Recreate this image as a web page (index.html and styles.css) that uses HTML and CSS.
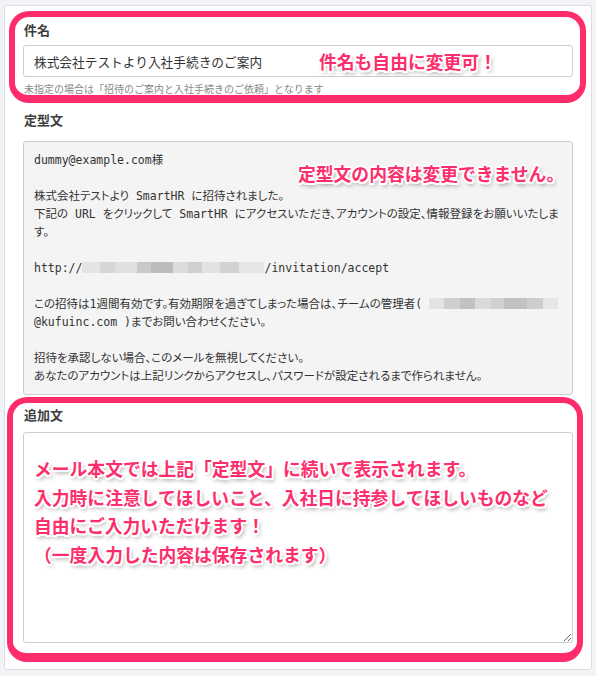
FILE: index.html
```html
<!DOCTYPE html>
<html lang="ja">
<head>
<meta charset="utf-8">
<title>招待メール</title>
<link rel="stylesheet" href="styles.css">
</head>
<body>
<div class="card">
  <div class="mark mark-subject">
    <div class="field-label">件名</div>
    <div class="input-wrap">
      <input class="text-input" type="text" value="株式会社テストより入社手続きのご案内">
      <span class="note note-subject">件名も自由に変更可！</span>
    </div>
    <p class="help">未指定の場合は「招待のご案内と入社手続きのご依頼」となります</p>
  </div>

  <div class="field-label template-label">定型文</div>
  <div class="template">
<pre class="template-text">dummy@example.com様

株式会社テストより SmartHR に招待されました。
下記の URL をクリックして SmartHR にアクセスいただき、アカウントの設定、情報登録をお願いいたしま
す。

http://<span class="blur blur-url"></span>/invitation/accept

この招待は1週間有効です。有効期限を過ぎてしまった場合は、チームの管理者( <span class="blur blur-mail"></span>
@kufuinc.com )までお問い合わせください。

招待を承認しない場合、このメールを無視してください。
あなたのアカウントは上記リンクからアクセスし、パスワードが設定されるまで作られません。</pre>
    <span class="note note-template">定型文の内容は変更できません。</span>
  </div>

  <div class="mark mark-extra">
    <div class="field-label">追加文</div>
    <div class="textarea-wrap">
      <textarea class="textarea"></textarea>
      <div class="note note-extra">メール本文では上記「定型文」に続いて表示されます。<br>入力時に注意してほしいこと、入社日に持参してほしいものなど<br>自由にご入力いただけます！<br>（一度入力した内容は保存されます）</div>
    </div>
  </div>
</div>
</body>
</html>
```

FILE: styles.css
```css
* {
  box-sizing: border-box;
}

html, body {
  margin: 0;
  padding: 0;
}

body {
  background: #f2f3f6;
  font-family: "Noto Sans CJK JP", "Noto Sans", sans-serif;
  color: #333;
  width: 596px;
  height: 676px;
  overflow: hidden;
}

.card {
  margin: 5px 0 0 4px;
  width: 588px;
  background: #fff;
  border: 1px solid #dcdde1;
  border-radius: 3px;
  padding: 5px 0 7px;
}

.mark {
  border: 6px solid #ff2c6c;
  border-radius: 20px;
}

.mark-subject {
  margin: 0 5px 0 4px;
  padding: 4px 7px 0 8px;
  border-bottom-width: 8px;
}

.mark-extra {
  margin: 2px 8px 0 2px;
  padding: 3px 4px 10px 10px;
  border-bottom-width: 9px;
}

.field-label {
  font-size: 13px;
  line-height: 18px;
  font-weight: 700;
  color: #3d3d3d;
  padding-left: 1px;
}

.mark-subject .field-label {
  margin-bottom: 6px;
}

.mark-extra .field-label {
  margin-bottom: 8px;
}

.template-label {
  margin: 8px 18px 0 18px;
}

.input-wrap,
.template,
.textarea-wrap {
  position: relative;
}

.text-input {
  display: block;
  width: 100%;
  height: 32px;
  border: 1px solid #cfcfcf;
  border-radius: 3px;
  padding: 0 10px;
  font-family: "Noto Sans CJK JP", sans-serif;
  font-size: 12.7px;
  color: #333;
  background: #fff;
}

.help {
  margin: 6px 0 0 1px;
  font-size: 10px;
  line-height: 12px;
  color: #888;
}

.template {
  margin: 12px 18px 0 18px;
  background: #f4f4f4;
  border: 1px solid #cccccc;
  border-radius: 3px;
}

.template-text {
  margin: 0;
  padding: 9px 10px;
  font-family: "DejaVu Sans Mono", "Noto Sans CJK JP", monospace;
  font-size: 11.5px;
  line-height: 18px;
  color: #333;
  white-space: pre;
  font-feature-settings: "palt";
  overflow: hidden;
}

.blur {
  display: inline-block;
  vertical-align: -1px;
  height: 11px;
  filter: blur(0.6px);
}

.blur-url {
  width: 182px;
  background: linear-gradient(90deg,
    #e4e4e4 0 10%, #d6d6d6 10% 18%, #e0e0e0 18% 30%, #c9c9c9 30% 38%,
    #bcbcbc 38% 50%, #dcdcdc 50% 58%, #cfcfcf 58% 66%, #e2e2e2 66% 76%,
    #d2d2d2 76% 86%, #e6e6e6 86% 100%);
}

.blur-mail {
  width: 129px;
  background: linear-gradient(90deg,
    #e3e3e3 0 12%, #cfcfcf 12% 24%, #c4c0c4 24% 36%, #dadada 36% 48%,
    #d0d0d0 48% 58%, #c2c2c2 58% 76%, #cdcdcd 76% 88%, #e6e6e6 88% 100%);
}

.textarea {
  display: block;
  width: 100%;
  height: 211px;
  border: 1px solid #cfcfcf;
  border-radius: 3px;
  background: #fff;
  margin: 0;
}

.note {
  position: absolute;
  color: #fd2e6c;
  font-weight: 700;
  font-size: 17.8px;
  line-height: 22px;
  white-space: nowrap;
  text-shadow:
    -2px 0 0 #fff, 2px 0 0 #fff, 0 -2px 0 #fff, 0 2px 0 #fff,
    -1.5px -1.5px 0 #fff, 1.5px -1.5px 0 #fff, -1.5px 1.5px 0 #fff, 1.5px 1.5px 0 #fff,
    2px 3px 4px rgba(0, 0, 0, 0.45);
}

.note-subject {
  left: 296px;
  top: 5px;
}

.note-template {
  left: 274px;
  top: 20px;
}

.note-extra {
  left: 11px;
  top: 22px;
  line-height: 28.5px;
}
```
